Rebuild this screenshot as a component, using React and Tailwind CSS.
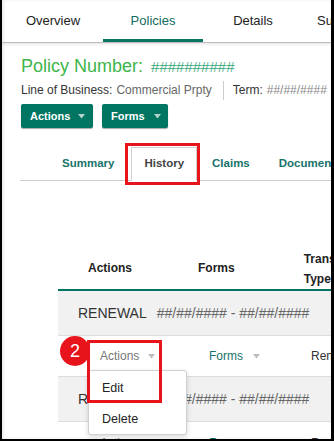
import React from "react";

const Caret = ({ color = "#bdbdbd" }) => (
  <svg width="7" height="5" viewBox="0 0 7 5" className="inline-block">
    <path d="M0 0 L7 0 L3.5 4.5 Z" fill={color} />
  </svg>
);

export default function App() {
  return (
    <div className="w-[334px] h-[441px] bg-black pl-[2px] pr-[3px] pb-[2px] flex font-['Liberation_Sans',Arial,sans-serif]">
      <div className="relative flex-1 bg-white overflow-hidden shadow-[inset_2px_0_3px_rgba(0,0,0,0.08)]">
        {/* Top nav */}
        <div className="h-[43px] flex pl-[1px] border-b border-[#bdbdbd] shadow-[0_1px_3px_rgba(0,0,0,0.12)] text-[13px] whitespace-nowrap">
          <div className="w-[100px] shrink-0 flex items-center justify-center text-[#222]">Overview</div>
          <div className="w-[100px] shrink-0 flex items-center justify-center text-[#0f6b60] border-b-[3px] border-[#0b7563] pt-[3px]">Policies</div>
          <div className="w-[100px] shrink-0 flex items-center justify-center text-[#222]">Details</div>
          <div className="w-[100px] shrink-0 flex items-center pl-[14px] text-[#222]">Submissions</div>
        </div>

        {/* Policy header */}
        <div className="pl-[19px]">
          <div className="mt-[12px] h-[22px] flex items-baseline whitespace-nowrap">
            <span className="text-[18px] leading-[22px] text-[#3cb54a]">Policy Number:</span>
            <span className="ml-[8px] text-[15px] text-[#4aae86]">##########</span>
          </div>
          <div className="mt-[3px] h-[20px] flex items-center text-[12px] whitespace-nowrap">
            <span className="text-[#333]">Line of Business:</span>
            <span className="ml-[4px] text-[#666]">Commercial Prpty</span>
            <span className="ml-[11px] h-[19px] border-l border-[#ccc]"></span>
            <span className="ml-[9px] text-[#333]">Term:</span>
            <span className="ml-[4px] text-[#888]">##/##/####</span>
            <span className="ml-[5px] text-[#888]">##/##/####</span>
          </div>
          <div className="mt-[4px] flex gap-[9px]">
            <div className="h-[24px] w-[72px] rounded-[2px] bg-[#007562] shadow-[0_1px_1px_rgba(0,0,0,0.35)] flex items-center pl-[9px] gap-[8px] text-white font-bold text-[11px]">
              Actions <Caret color="#b5d3cc" />
            </div>
            <div className="h-[24px] w-[66px] rounded-[2px] bg-[#007562] shadow-[0_1px_1px_rgba(0,0,0,0.35)] flex items-center pl-[9px] gap-[9px] text-white font-bold text-[11px]">
              Forms <Caret color="#b5d3cc" />
            </div>
          </div>
        </div>

        {/* Secondary tabs */}
        <div className="ml-[18px] mt-[19px] h-[34px] border-b border-[#cfcfcf] flex items-end whitespace-nowrap text-[11.5px] font-bold">
          <div className="ml-[30px] h-[33px] px-[12px] flex items-center text-[#17736b]">Summary</div>
          <div className="ml-[5px] h-[34px] px-[12px] -mb-px flex items-center text-[#444] bg-white border border-[#cfcfcf] border-b-white">History</div>
          <div className="ml-[3px] h-[33px] px-[12px] flex items-center text-[#17736b]">Claims</div>
          <div className="ml-[5px] h-[33px] px-[12px] flex items-center text-[#17736b]">Documents</div>
        </div>

        {/* Table */}
        <div className="ml-[56px] mt-[68px] w-[400px]">
          <div className="h-[42px] flex items-center border-b-2 border-[#007562] font-bold text-[12px] text-[#222] whitespace-nowrap">
            <span className="ml-[30px] pb-[2px]">Actions</span>
            <span className="ml-[66px] pb-[2px]">Forms</span>
            <span className="ml-[69px] leading-[20px]">Trans<br />Type</span>
          </div>
          <div className="h-[45px] bg-[#f1f1f1] border-b border-[#dcdcdc] flex items-center text-[14px] whitespace-nowrap">
            <span className="ml-[20px] text-[#333]">RENEWAL</span>
            <span className="ml-[10px] text-[#666]">##/##/#### - ##/##/####</span>
          </div>
          <div className="h-[41px] border-b border-[#dcdcdc] flex items-center text-[12px] whitespace-nowrap">
            <span className="ml-[42px] w-[109px] flex items-center gap-[9px] text-[#777]">Actions <Caret /></span>
            <span className="w-[102px] flex items-center gap-[10px] text-[#17736b]">Forms <Caret /></span>
            <span className="text-[#333]">Renewal</span>
          </div>
          <div className="h-[45px] bg-[#f1f1f1] border-b border-[#dcdcdc] flex items-center text-[14px] whitespace-nowrap">
            <span className="ml-[20px] text-[#333]">RENEWAL</span>
            <span className="ml-[10px] text-[#666]">##/##/#### - ##/##/####</span>
          </div>
          <div className="h-[41px] flex items-center text-[12px] whitespace-nowrap">
            <span className="ml-[42px] w-[109px] flex items-center gap-[9px] text-[#777]">Actions <Caret /></span>
            <span className="w-[102px] flex items-center gap-[10px] text-[#17736b]">Forms <Caret /></span>
            <span className="text-[#333]">Renewal</span>
          </div>
        </div>

        {/* Dropdown menu */}
        <div className="absolute left-[86px] top-[370px] w-[99px] h-[65px] bg-white border border-[#d0d0d0] rounded-[3px] shadow-[0_2px_5px_rgba(0,0,0,0.15)] text-[12.5px] text-[#222]">
          <div className="h-[33px] flex items-center pl-[13px] pt-[1px]">Edit</div>
          <div className="h-[31px] flex items-center pl-[13px]">Delete</div>
        </div>

        {/* Annotations */}
        <div className="absolute left-[123px] top-[143px] w-[75px] h-[42px] border-[3px] border-[#e8141b]"></div>
        <div className="absolute left-[85px] top-[340px] w-[75px] h-[63px] border-[3px] border-[#e8141b]"></div>
        <div className="absolute left-[58px] top-[336px] w-[30px] h-[30px] rounded-full bg-[#e8141b] flex items-center justify-center text-white text-[18px] leading-none">2</div>
      </div>
    </div>
  );
}
